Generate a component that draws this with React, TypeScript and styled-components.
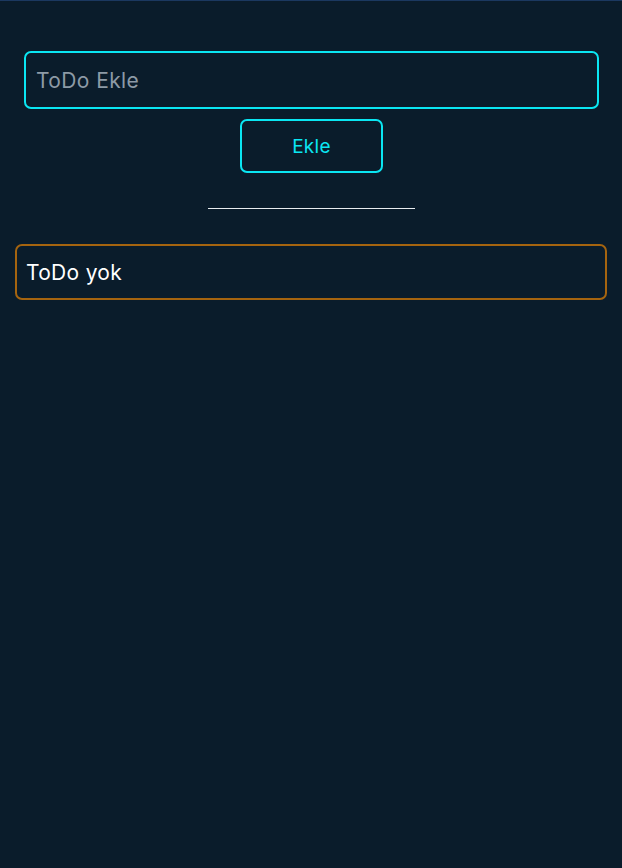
import { useState } from 'react'
import styled, { createGlobalStyle } from 'styled-components'

const GlobalStyle = createGlobalStyle`
  * {
    box-sizing: border-box;
  }

  body {
    margin: 0;
    background: #0a1c2b;
    border-top: 1px solid #1b3860;
    font-family: Inter, "Noto Sans", sans-serif;
    min-height: 100vh;
  }
`

const Page = styled.div`
  display: flex;
  flex-direction: column;
  padding: 50px 15px 0;
`

const Form = styled.form`
  display: flex;
  flex-direction: column;
  align-items: center;
  gap: 10px;
  padding: 0 8px 0 9px;
`

const Input = styled.input`
  width: 100%;
  height: 58px;
  background: transparent;
  border: 2px solid #0ae6f2;
  border-radius: 7px;
  outline: none;
  padding: 0 10px;
  font-family: inherit;
  font-size: 21px;
  letter-spacing: 0.4px;
  color: #fff;

  &::placeholder {
    color: #8d9aa6;
  }
`

const AddButton = styled.button`
  width: 143px;
  height: 54px;
  background: transparent;
  border: 2px solid #0ae6f2;
  border-radius: 7px;
  color: #0ae6f2;
  font-family: inherit;
  font-size: 19px;
  letter-spacing: 0.3px;
  cursor: pointer;
`

const Divider = styled.hr`
  width: 207px;
  margin: 35px auto;
  border: none;
  border-top: 1px solid #e8ecef;
`

const TodoList = styled.ul`
  list-style: none;
  margin: 0;
  padding: 0;
  display: flex;
  flex-direction: column;
  gap: 10px;
`

const TodoItem = styled.li<{ $empty?: boolean }>`
  height: 56px;
  display: flex;
  align-items: center;
  padding: 0 9px;
  border: 2px solid ${(p) => (p.$empty ? '#a5640f' : '#0ae6f2')};
  border-radius: 7px;
  color: #fff;
  font-size: 21px;
  letter-spacing: 0.3px;
`

function App() {
  const [text, setText] = useState('')
  const [todos, setTodos] = useState<string[]>([])

  const addTodo = (e: any) => {
    e.preventDefault()
    if (!text.trim()) return
    setTodos([...todos, text.trim()])
    setText('')
  }

  return (
    <>
      <GlobalStyle />
      <Page>
        <Form onSubmit={addTodo}>
          <Input
            value={text}
            onChange={(e) => setText(e.target.value)}
            placeholder="ToDo Ekle"
          />
          <AddButton type="submit">Ekle</AddButton>
        </Form>
        <Divider />
        <TodoList>
          {todos.length === 0 ? (
            <TodoItem $empty>ToDo yok</TodoItem>
          ) : (
            todos.map((t, i) => <TodoItem key={i}>{t}</TodoItem>)
          )}
        </TodoList>
      </Page>
    </>
  )
}

export default App
